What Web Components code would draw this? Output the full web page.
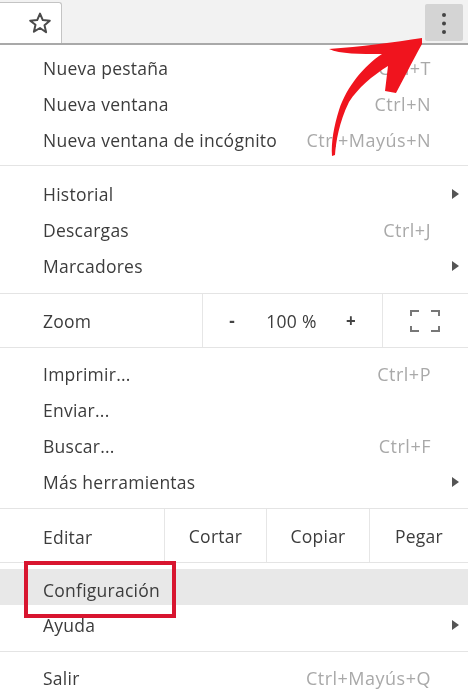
<!DOCTYPE html>
<html lang="es"><head><meta charset="utf-8"><title>Menú</title>
<style>
html,body{margin:0;padding:0;background:#fff;height:693px;overflow:hidden}
body{font:17.5px "Open Sans","Noto Sans",sans-serif;color:#3c3c3c;position:relative;filter:blur(.35px)}
</style></head><body>
<browser-bar></browser-bar>
<menu-group pt="6" pb="6">
 <menu-item key="Ctrl+T">Nueva pestaña</menu-item>
 <menu-item key="Ctrl+N">Nueva ventana</menu-item>
 <menu-item key="Ctrl+Mayús+N">Nueva ventana de incógnito</menu-item>
</menu-group>
<menu-group pt="11" pb="8">
 <menu-item arrow>Historial</menu-item>
 <menu-item key="Ctrl+J">Descargas</menu-item>
 <menu-item arrow>Marcadores</menu-item>
</menu-group>
<zoom-row></zoom-row>
<menu-group pt="9" pb="7">
 <menu-item key="Ctrl+P">Imprimir...</menu-item>
 <menu-item>Enviar...</menu-item>
 <menu-item key="Ctrl+F">Buscar...</menu-item>
 <menu-item arrow>Más herramientas</menu-item>
</menu-group>
<edit-row></edit-row>
<menu-group pt="6" pb="7">
 <menu-item active>Configuración</menu-item>
 <menu-item arrow style="margin-top:3px">Ayuda</menu-item>
</menu-group>
<menu-group pt="9" pb="0" last>
 <menu-item key="Ctrl+Mayús+Q">Salir</menu-item>
</menu-group>
<call-outs></call-outs>
<script>
function def(name, html){
  customElements.define(name, class extends HTMLElement{
    connectedCallback(){
      if(this.shadowRoot) return;
      const r=this.attachShadow({mode:'open'});
      r.innerHTML=typeof html==='function'?html(this):html;
    }
  });
}
def('browser-bar',`<style>
:host{display:flex;justify-content:space-between;height:43px;background:#f2f2f2;border-bottom:2px solid #a9a9a9}
.url{width:62px;height:41px;box-sizing:border-box;background:#fff;border:1px solid #c4c4c4;border-width:1px 1px 0 0;border-top-right-radius:3px;margin-top:2px;display:flex;align-items:center;justify-content:flex-end;padding-right:9px}
.more{width:38px;height:37px;margin:4px 5px 0 0;background:#d4d4d4;border-radius:2px;display:flex;align-items:center;justify-content:center}
</style><div class="url"><svg width="24" height="24" viewBox="0 0 24 24"><path d="M12 2.6l2.8 6.5 7 .6-5.3 4.6 1.6 6.9L12 17l-6.1 3.7 1.6-6.9L2.2 9.7l7-.6z" fill="none" stroke="#4a4a4a" stroke-width="2" stroke-linejoin="round"/></svg></div>
<div class="more"><svg width="6" height="22" viewBox="0 0 6 22"><circle cx="3" cy="3" r="2" fill="#444"/><circle cx="3" cy="11.5" r="2" fill="#444"/><circle cx="3" cy="20" r="2" fill="#444"/></svg></div>`);
def('menu-group',h=>`<style>
:host{display:block;padding:${h.getAttribute('pt')}px 0 ${h.getAttribute('pb')}px;${h.hasAttribute('last')?'':'border-bottom:1px solid #e4e4e4'}}
</style><slot></slot>`);
def('menu-item',h=>`<style>
:host{display:flex;align-items:center;height:36px;padding:0 37px 0 43px;position:relative;justify-content:space-between;letter-spacing:.25px;white-space:nowrap;${h.hasAttribute('active')?'background:#e8e8e8;':''}}
.t{${h.hasAttribute('active')?'padding-top:5px;':'padding-bottom:2px;'}}
.k{color:#a9a9a9;font-size:18px;letter-spacing:.5px;padding-bottom:2px}
.a{position:absolute;right:9px;top:12px;width:0;height:0;border-left:7px solid #555;border-top:5px solid transparent;border-bottom:5px solid transparent}
</style><span class="t"><slot></slot></span>${h.getAttribute('key')?`<span class="k">${h.getAttribute('key')}</span>`:''}${h.hasAttribute('arrow')?'<span class="a"></span>':''}`);
def('zoom-row',`<style>
:host{display:flex;height:53px;border-bottom:1px solid #e4e4e4;letter-spacing:.25px}
div{display:flex;align-items:center}
.l{width:202px;box-sizing:border-box;padding-left:43px}
.m{width:181px;box-sizing:border-box;border-left:1px solid #e6e6e6;border-right:1px solid #e6e6e6;justify-content:space-between;padding:0 25px 0 23px}
.f{flex:1;justify-content:center;padding-right:1px}
b{font-weight:700;font-size:17px;color:#444;width:12px;text-align:center}
</style><div class="l">Zoom</div><div class="m"><b>-</b><span>100 %</span><b>+</b></div>
<div class="f"><svg width="30" height="24" viewBox="0 0 30 24" fill="none" stroke="#777" stroke-width="2"><path d="M1 7V2h8M21 2h8v5M1 17v5h8M21 22h8v-5"/></svg></div>`);
def('edit-row',`<style>
:host{display:flex;height:53px;border-bottom:1px solid #e4e4e4;letter-spacing:.25px}
div{display:flex;align-items:center;justify-content:center;box-sizing:border-box;border-left:1px solid #e6e6e6;padding-top:0}
.l{width:164px;border:0;padding:3px 0 0 43px;justify-content:flex-start}
.c{width:102px}.d{width:103px}.p{flex:1}
</style><div class="l">Editar</div><div class="c">Cortar</div><div class="d">Copiar</div><div class="p">Pegar</div>`);
def('call-outs',`<style>
:host{display:block;position:absolute;left:0;top:0;width:468px;height:693px;pointer-events:none}
.box{position:absolute;left:24px;top:561px;width:152px;height:57px;box-sizing:border-box;border:4px solid #d8152f}
svg{position:absolute;left:0;top:0}
</style><div class="box"></div>
<svg width="468" height="693" viewBox="0 0 468 693"><path fill="#f0141e" d="M422 38C395 42 360 47 329 49C340 54 360 54 382 54C364 66 347 86 339 110C334 126 331 142 332 156L335 155C336 142 339 122 349 102C358 88 372 76 388 66L385 91L396 93C402 82 412 62 422 44Z"/></svg>`);
</script>
</body></html>
